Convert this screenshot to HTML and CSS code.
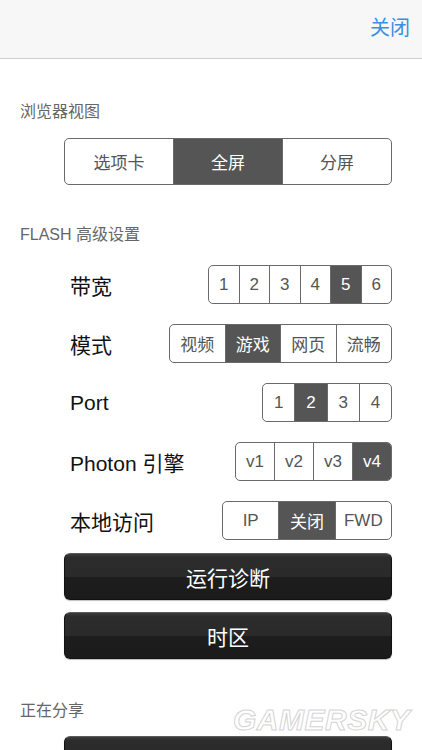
FILE: index.html
```html
<!DOCTYPE html>
<html lang="zh-CN">
<head>
<meta charset="utf-8">
<title>设置</title>
<link rel="stylesheet" href="styles.css">
</head>
<body>
<header class="topbar">
  <span class="close">关闭</span>
</header>

<main class="content">
  <h2 class="section-title first">浏览器视图</h2>
  <div class="seg seg-view">
    <span class="opt">选项卡</span>
    <span class="opt on">全屏</span>
    <span class="opt">分屏</span>
  </div>

  <h2 class="section-title flash">FLASH 高级设置</h2>

  <div class="rows">
    <div class="row">
      <span class="label">带宽</span>
      <div class="seg small seg-bw">
        <span class="opt">1</span><span class="opt">2</span><span class="opt">3</span>
        <span class="opt">4</span><span class="opt on">5</span><span class="opt">6</span>
      </div>
    </div>
    <div class="row">
      <span class="label">模式</span>
      <div class="seg small seg-mode">
        <span class="opt">视频</span><span class="opt on">游戏</span>
        <span class="opt">网页</span><span class="opt">流畅</span>
      </div>
    </div>
    <div class="row">
      <span class="label">Port</span>
      <div class="seg small seg-port">
        <span class="opt">1</span><span class="opt on">2</span>
        <span class="opt">3</span><span class="opt">4</span>
      </div>
    </div>
    <div class="row">
      <span class="label">Photon 引擎</span>
      <div class="seg small seg-photon">
        <span class="opt">v1</span><span class="opt">v2</span>
        <span class="opt">v3</span><span class="opt on">v4</span>
      </div>
    </div>
    <div class="row">
      <span class="label">本地访问</span>
      <div class="seg small seg-local">
        <span class="opt">IP</span><span class="opt on">关闭</span><span class="opt">FWD</span>
      </div>
    </div>
  </div>

  <div class="actions">
    <button class="dark-btn">运行诊断</button>
    <button class="dark-btn">时区</button>
  </div>

  <h2 class="section-title share">正在分享</h2>
  <div class="actions">
    <button class="dark-btn"></button>
  </div>
</main>

<div class="watermark">GAMERSKY</div>
</body>
</html>
```

FILE: styles.css
```css
* {
  box-sizing: border-box;
}

html, body {
  margin: 0;
  padding: 0;
  background: #ffffff;
}

body {
  width: 422px;
  height: 750px;
  overflow: hidden;
  position: relative;
  font-family: "Liberation Sans", "Noto Sans CJK SC", sans-serif;
  color: #111;
}

/* top navigation bar */
.topbar {
  height: 59px;
  background: #f7f7f7;
  border-bottom: 1px solid #cfcfcf;
  display: flex;
  align-items: center;
  justify-content: flex-end;
  padding: 0 12px 2px 0;
}

.close {
  font-size: 20px;
  color: #3b8fe2;
  line-height: 24px;
}

.content {
  display: flex;
  flex-direction: column;
}

.section-title {
  margin: 0;
  padding-left: 20px;
  font-size: 16px;
  font-weight: normal;
  line-height: 20px;
  color: #666;
}

.section-title.first {
  margin-top: 43px;
}

.section-title.flash {
  margin-top: 40px;
}

.section-title.share {
  margin-top: 42px;
  margin-bottom: 15px;
}

/* segmented controls */
.seg {
  display: flex;
  border: 1.5px solid #6a6a6a;
  border-radius: 5px;
  overflow: hidden;
  background: #fff;
}

.seg .opt {
  flex: 1;
  display: flex;
  align-items: center;
  justify-content: center;
  color: #555;
  border-left: 1.5px solid #6a6a6a;
}

.seg .opt:first-child {
  border-left: none;
}

.seg .opt.on {
  background: #555;
  color: #fff;
}

.seg-view {
  margin: 16px 30px 0 64px;
  height: 47px;
  font-size: 17px;
}

.seg.small {
  height: 39px;
  font-size: 17px;
}

.seg-bw { width: 184px; }
.seg-mode { width: 223px; }
.seg-port { width: 130px; }
.seg-photon { width: 157px; }
.seg-local { width: 170px; }

.seg-mode .opt,
.seg-local .opt {
  font-size: 17px;
}

/* labelled option rows */
.rows {
  display: flex;
  flex-direction: column;
  gap: 20px;
  margin-top: 20px;
  padding: 0 30px 0 70px;
}

.row {
  display: flex;
  align-items: center;
  justify-content: space-between;
}

.label {
  font-size: 21px;
  color: #111;
}

/* glossy dark buttons */
.actions {
  display: flex;
  flex-direction: column;
  gap: 12px;
  margin-top: 13px;
  padding: 0 30px 0 64px;
}

.share + .actions {
  margin-top: 0;
}

.dark-btn {
  height: 47px;
  border: 1px solid #111;
  border-top-color: #5a5a5a;
  border-radius: 6px;
  background: linear-gradient(to bottom, #3c3c3c 0%, #2c2c2c 8%, #2a2a2a 50%, #1d1d1d 52%, #1b1b1b 100%);
  box-shadow: 0 1px 1px rgba(0, 0, 0, 0.25);
  color: #fff;
  font-family: "Noto Sans CJK SC", sans-serif;
  font-size: 21px;
  padding: 0;
}

/* faint site mark in the lower corner */
.watermark {
  position: absolute;
  left: 233px;
  top: 703px;
  font-family: "Liberation Sans", sans-serif;
  font-size: 30px;
  font-weight: bold;
  font-style: italic;
  letter-spacing: 0.5px;
  color: rgba(255, 255, 255, 0.9);
  -webkit-text-stroke: 1px #d4d4d4;
}
```
